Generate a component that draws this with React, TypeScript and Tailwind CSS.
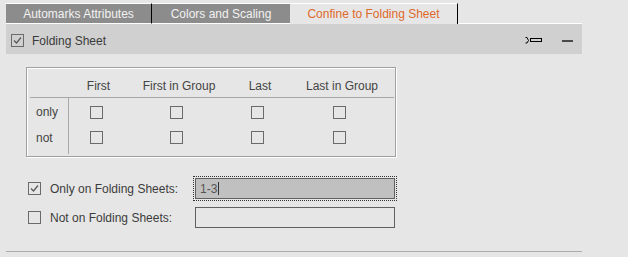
import { ReactNode } from "react";

function Box({ checked = false, className = "" }: { checked?: boolean; className?: string }) {
  return (
    <span className={`flex h-[13px] w-[13px] shrink-0 items-center justify-center border border-[#6a6a6a] ${className}`}>
      {checked && (
        <svg width="11" height="11" viewBox="0 0 11 11">
          <path d="M2 5.5 L4.5 8 L9 2.5" fill="none" stroke="#5a5a5a" strokeWidth="1.3" />
        </svg>
      )}
    </span>
  );
}

function Tab({ children, active = false, className = "" }: { children: ReactNode; active?: boolean; className?: string }) {
  return (
    <div
      className={`flex h-[21px] items-center justify-center border-t border-white ${
        active ? "bg-[#e6e6e6] text-[#e0692a]" : "border-b bg-[#8c8c8c] text-[#f2f2f2]"
      } ${className}`}
    >
      {children}
    </div>
  );
}

const cols = [
  { label: "First", w: "w-[59px]" },
  { label: "First in Group", w: "w-[102px]" },
  { label: "Last", w: "w-[60px]" },
  { label: "Last in Group", w: "w-[104px]" },
];

export default function App() {
  return (
    <div
      className="h-[257px] w-[628px] overflow-hidden bg-[#e6e6e6] pl-[6px] pt-[3px] text-[12px] leading-[14px] text-[#3c3c3c]"
      style={{ fontFamily: '"Liberation Sans", Arial, sans-serif' }}
    >
      {/* tabs */}
      <div className="flex w-[576px]">
        <Tab className="w-[146px] border-r border-r-black">Automarks Attributes</Tab>
        <Tab className="w-[138px]">Colors and Scaling</Tab>
        <Tab active className="w-[168px] border-r border-r-black">Confine to Folding Sheet</Tab>
        <div className="flex-1 self-end border-b border-white" />
      </div>

      {/* section header */}
      <div className="flex h-[30px] w-[576px] items-center bg-[#d0d0d0] pl-[5px] pt-[3px]">
        <Box checked />
        <span className="ml-[8px] text-[#3a3a3a]">Folding Sheet</span>
        <div className="ml-auto flex items-center">
          <svg width="17" height="7" viewBox="0 0 17 7" className="mt-[-1px]">
            <path d="M0.5 0.5 H2 L3.5 3.5 L2 6 H0.5" fill="none" stroke="#000" strokeWidth="1" />
            <rect x="5.5" y="1.5" width="11" height="3" fill="none" stroke="#000" strokeWidth="1" />
          </svg>
          <span className="ml-[20px] mr-[9px] h-[2px] w-[11px] bg-[#4a4a4a]" />
        </div>
      </div>

      {/* table */}
      <div className="ml-[20px] mt-[13px] w-[370px] border border-[#a0a0a0] pb-[2px] pl-[3px] pr-[1px] shadow-[inset_1px_1px_0_#fff,1px_1px_0_#fff]">
        <div className="flex h-[30px] items-center border-b border-[#a8a8a8] pt-[7px]">
          <div className="w-[39px]" />
          {cols.map((c) => (
            <div key={c.label} className={`${c.w} text-center text-[#444]`}>
              {c.label}
            </div>
          ))}
        </div>
        <div className="flex h-[56px]">
          <div className="flex w-[39px] flex-col gap-[11px] border-r border-[#a8a8a8] pl-[6px] pt-[7px] text-[#444]">
            <span className="leading-[15px]">only</span>
            <span className="leading-[15px]">not</span>
          </div>
          {cols.map((c) => (
            <div key={c.label} className={`${c.w} flex flex-col items-center gap-[12px] pr-[5px] pt-[8px]`}>
              <Box />
              <Box />
            </div>
          ))}
        </div>
      </div>

      {/* folding sheet ranges */}
      <div className="ml-[22px] mt-[19px] flex flex-col gap-[4px]">
        <div className="flex items-center">
          <Box checked />
          <span className="ml-[9px] w-[143px]">Only on Folding Sheets:</span>
          <div className="border border-dotted border-[#333] p-px">
            <div className="flex h-[21px] w-[200px] items-center border border-[#606060] bg-[#c0c0c0] pl-[4px] text-[#555]">
              1-3
              <span className="ml-px h-[13px] w-px bg-[#333]" />
            </div>
          </div>
        </div>
        <div className="flex items-center">
          <Box />
          <span className="ml-[9px] w-[143px]">Not on Folding Sheets:</span>
          <div className="border border-transparent p-px">
            <div className="h-[21px] w-[200px] border border-[#606060] bg-[#e6e6e6]" />
          </div>
        </div>
      </div>

      <div className="mt-[21px] h-px w-[576px] bg-[#ababab]" />
    </div>
  );
}
